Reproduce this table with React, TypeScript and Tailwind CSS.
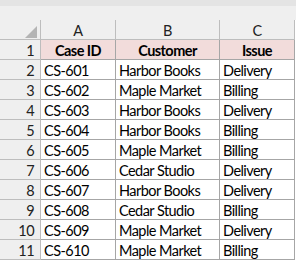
import React from "react";

const rows: [string, string, string][] = [
  ["CS-601", "Harbor Books", "Delivery"],
  ["CS-602", "Maple Market", "Billing"],
  ["CS-603", "Harbor Books", "Delivery"],
  ["CS-604", "Harbor Books", "Billing"],
  ["CS-605", "Maple Market", "Billing"],
  ["CS-606", "Cedar Studio", "Delivery"],
  ["CS-607", "Harbor Books", "Delivery"],
  ["CS-608", "Cedar Studio", "Billing"],
  ["CS-609", "Maple Market", "Delivery"],
  ["CS-610", "Maple Market", "Billing"],
];

export default function App() {
  return (
    <div
      className="w-[296px] h-[262px] bg-white overflow-hidden text-[14.5px] tracking-[-0.55px] text-black"
      style={{ fontFamily: "Lato, 'Open Sans', sans-serif" }}
    >
      <div className="h-[20px] bg-[#efefef] flex flex-col">
        <div className="h-[6px] bg-[#e4e4e4]" />
      </div>
      <div className="grid grid-cols-[41px_75px_104px_75px] auto-rows-[20px] leading-[21px]">
        {/* column header row */}
        <div className="relative bg-[#efefef] border-r border-b border-[#bdbdbd]">
          <svg className="absolute left-[25px] top-[6px]" width="12" height="12" viewBox="0 0 12 12">
            <polygon points="12,0 12,12 0,12" fill="#b4b4b4" />
          </svg>
        </div>
        {["A", "B", "C"].map((c) => (
          <div
            key={c}
            className="bg-[#efefef] border-r border-b border-[#bdbdbd] text-center text-[#222]"
          >
            {c}
          </div>
        ))}

        {/* row 1 header */}
        <div className="bg-[#efefef] border-r border-b border-[#bdbdbd] text-right pr-[6px] text-[#222]">
          1
        </div>
        <div className="bg-[#f2dcdb] border-r border-b border-[#a6a6a6] text-center font-bold">
          Case ID
        </div>
        <div className="bg-[#f2dcdb] border-r border-b border-[#a6a6a6] text-center font-bold">
          Customer
        </div>
        <div className="bg-[#f2dcdb] border-r border-b border-[#a6a6a6] text-center font-bold">
          Issue
        </div>

        {rows.map((r, i) => (
          <React.Fragment key={r[0]}>
            <div className="bg-[#efefef] border-r border-b border-[#bdbdbd] text-right pr-[6px] text-[#222]">
              {i + 2}
            </div>
            {r.map((v, j) => (
              <div
                key={j}
                className="border-r border-b border-[#a6a6a6] pl-[3px] whitespace-nowrap overflow-hidden"
              >
                {v}
              </div>
            ))}
          </React.Fragment>
        ))}
      </div>
    </div>
  );
}
